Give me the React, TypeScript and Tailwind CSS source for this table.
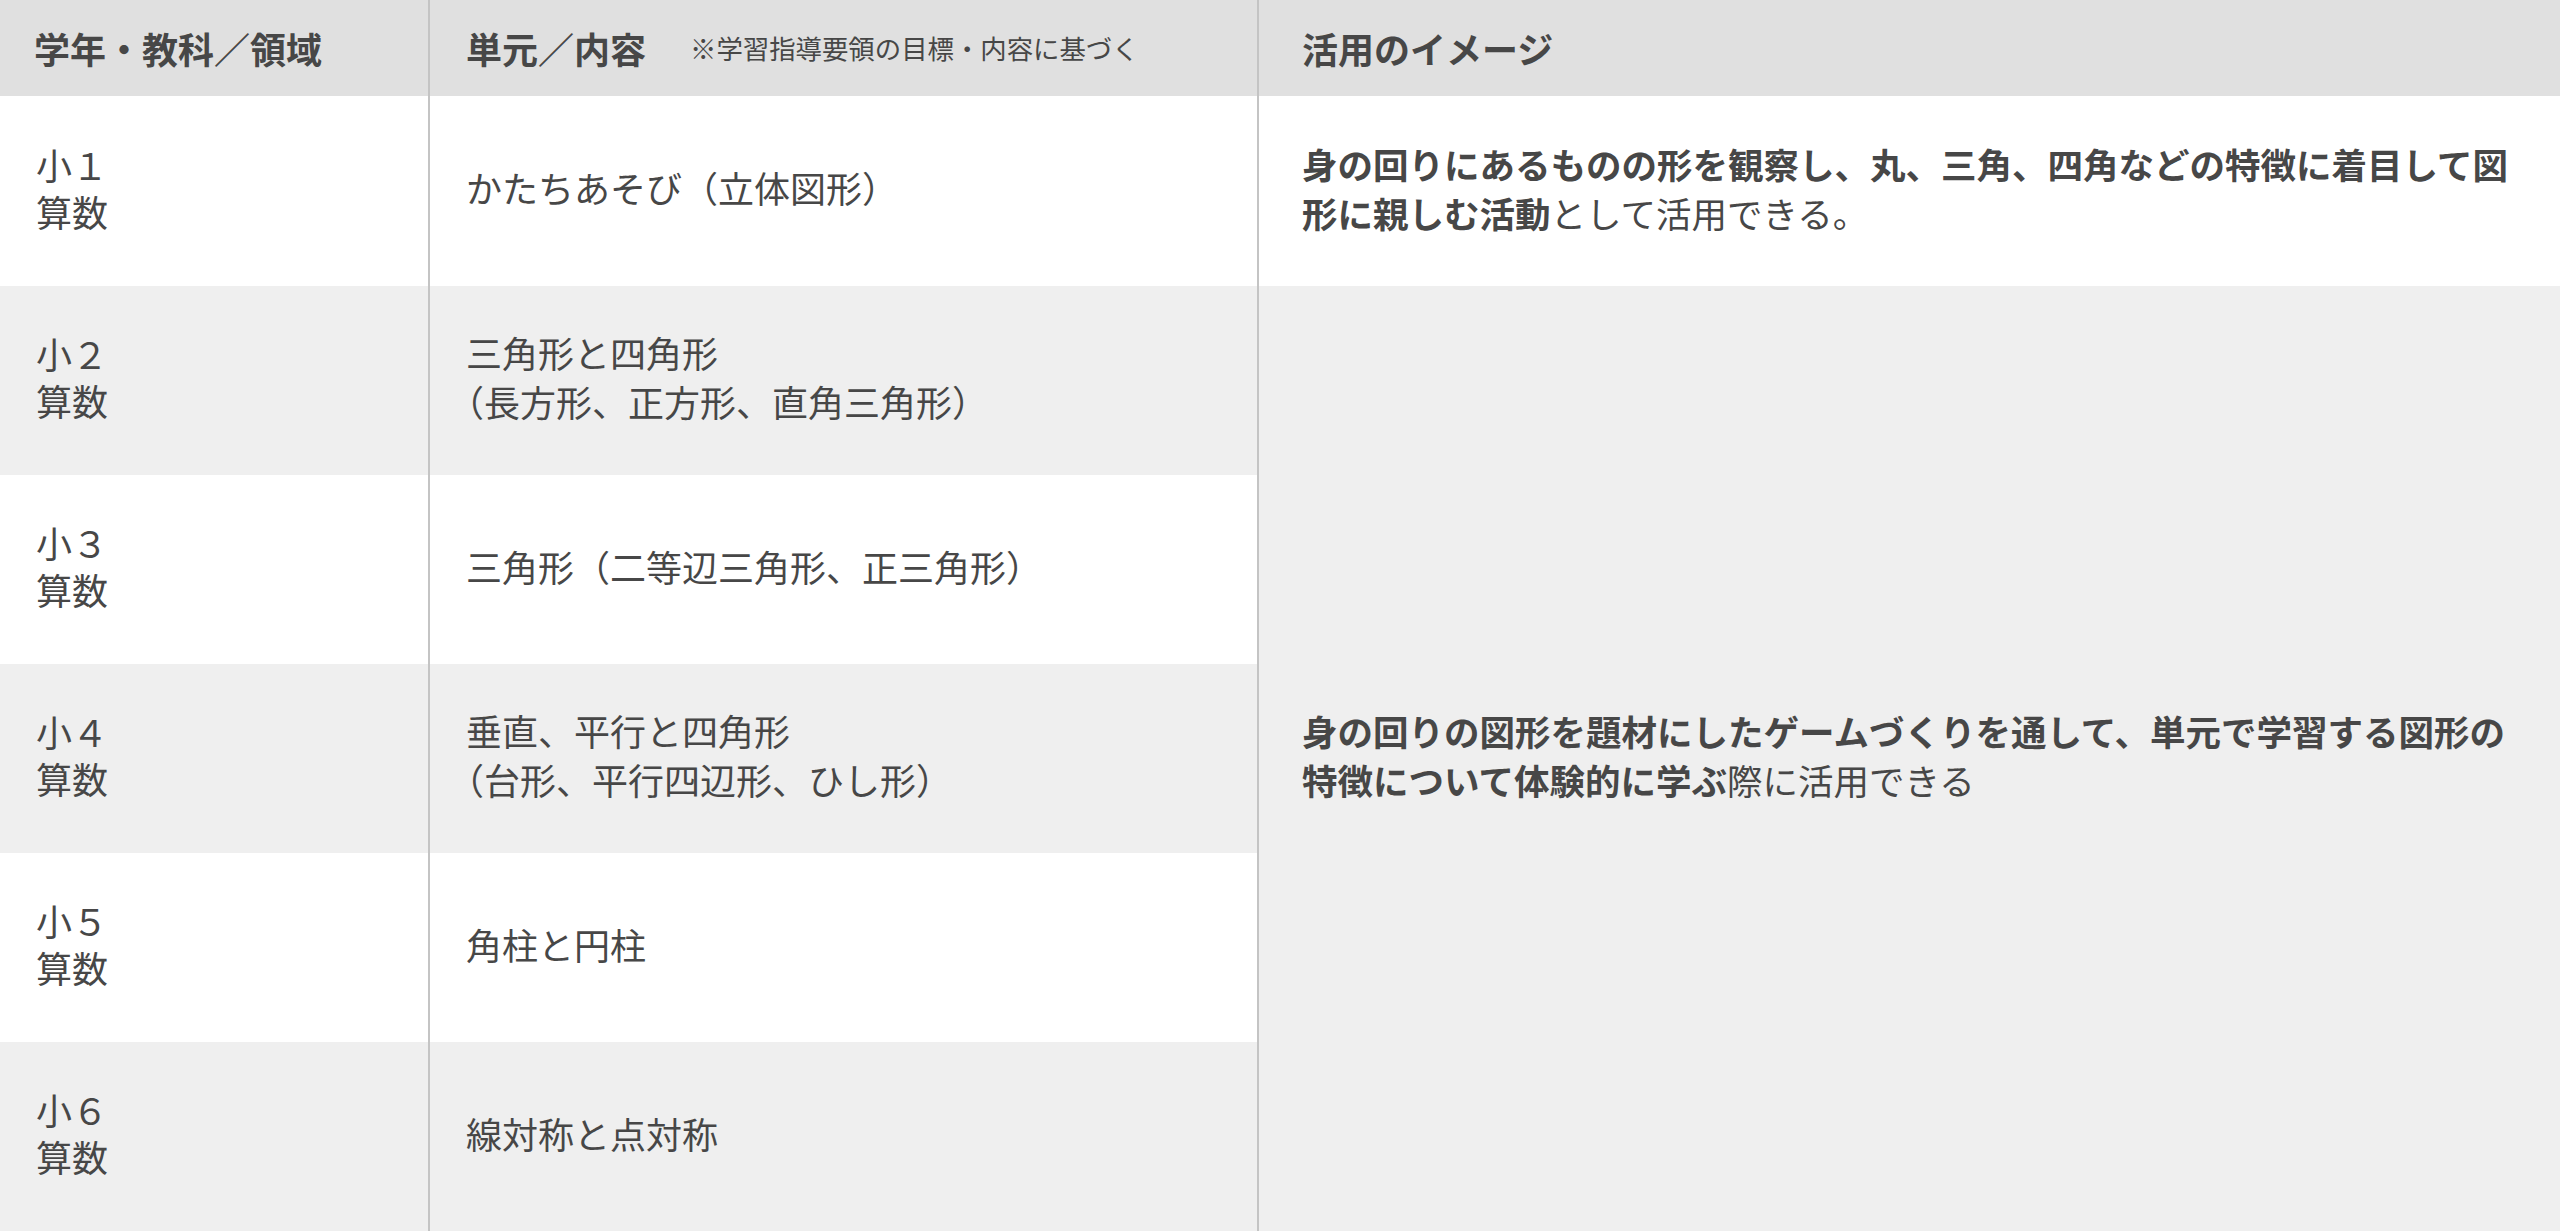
import React from "react";

const font = { fontFamily: '"Noto Sans CJK JP", "Noto Sans", sans-serif' };

type Row = { grade: string; unit: React.ReactNode; bg: string };

const rows: Row[] = [
  { grade: "小１", unit: <>かたちあそび（立体図形）</>, bg: "bg-white" },
  { grade: "小２", unit: <>三角形と四角形<br />（長方形、正方形、直角三角形）</>, bg: "bg-[#efefef]" },
  { grade: "小３", unit: <>三角形（二等辺三角形、正三角形）</>, bg: "bg-white" },
  { grade: "小４", unit: <>垂直、平行と四角形<br />（台形、平行四辺形、ひし形）</>, bg: "bg-[#efefef]" },
  { grade: "小５", unit: <>角柱と円柱</>, bg: "bg-white" },
  { grade: "小６", unit: <>線対称と点対称</>, bg: "bg-[#efefef]" },
];

export default function App() {
  return (
    <div
      className="w-[2560px] h-[1231px] overflow-hidden bg-white text-[#474747] [text-spacing-trim:trim-start]"
      style={font}
    >
      <div className="grid grid-cols-[428px_829px_1fr] grid-rows-[96px_190px_189px_189px_189px_189px_189px]">
        {/* header */}
        <div className="bg-[#e0e0e0] flex items-center pl-[34px] text-[36px] font-bold leading-none">
          学年・教科／領域
        </div>
        <div className="bg-[#e0e0e0] border-l-2 border-[#c4c4c4] flex items-center pl-[36px] leading-none">
          <span className="text-[36px] font-bold">単元／内容</span>
          <span className="ml-[44px] text-[26.4px]">※学習指導要領の目標・内容に基づく</span>
        </div>
        <div className="bg-[#e0e0e0] border-l-2 border-[#c4c4c4] flex items-center pl-[43px] text-[36px] font-bold leading-none">
          活用のイメージ
        </div>

        {rows.map((r, i) => (
          <React.Fragment key={i}>
            <div
              className={`${r.bg} flex items-center pl-[36px] pb-[7px] text-[36px] leading-[47px]`}
              style={{ gridColumn: 1, gridRow: i + 2 }}
            >
              <div>
                {r.grade}
                <br />
                算数
              </div>
            </div>
            <div
              className={`${r.bg} border-l-2 border-[#c4c4c4] flex items-center pl-[36px] pb-[7px] text-[36px] leading-[49px]`}
              style={{ gridColumn: 2, gridRow: i + 2 }}
            >
              <div>{r.unit}</div>
            </div>
          </React.Fragment>
        ))}

        <div
          className="bg-white border-l-2 border-[#c4c4c4] flex items-center pl-[43px] pr-[40px] pb-[6px] text-[35.5px] leading-[49px]"
          style={{ gridColumn: 3, gridRow: 2 }}
        >
          <p>
            <span className="font-bold">
              身の回りにあるものの形を観察し、丸、三角、四角などの特徴に着目して図形に親しむ活動
            </span>
            として活用できる。
          </p>
        </div>
        <div
          className="bg-[#efefef] border-l-2 border-[#c4c4c4] flex items-center pl-[43px] pr-[40px] pb-[8px] text-[35.5px] leading-[49px]"
          style={{ gridColumn: 3, gridRow: "3 / span 5" }}
        >
          <p>
            <span className="font-bold">
              身の回りの図形を題材にしたゲームづくりを通して、単元で学習する図形の特徴について体験的に学ぶ
            </span>
            際に活用できる
          </p>
        </div>
      </div>
    </div>
  );
}
